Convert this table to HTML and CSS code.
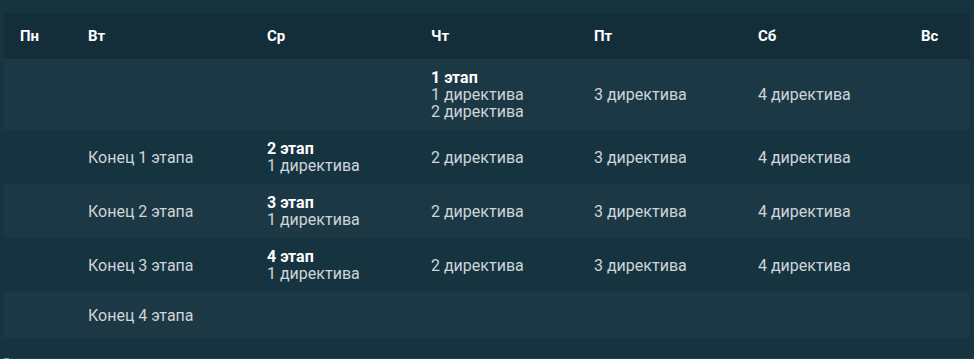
FILE: index.html
```html
<!DOCTYPE html>
<html lang="ru">
<head>
<meta charset="utf-8">
<link rel="stylesheet" href="styles.css">
</head>
<body>
<div class="wrap">
<table class="sched">
  <colgroup>
    <col class="c1"><col class="c2"><col class="c3"><col class="c4"><col class="c5"><col class="c6"><col class="c7">
  </colgroup>
  <thead>
    <tr><th>Пн</th><th>Вт</th><th>Ср</th><th>Чт</th><th>Пт</th><th>Сб</th><th>Вс</th></tr>
  </thead>
  <tbody>
    <tr class="odd">
      <td></td><td></td><td></td>
      <td><b>1 этап</b><br>1 директива<br>2 директива</td>
      <td>3 директива</td><td>4 директива</td><td></td>
    </tr>
    <tr>
      <td></td><td>Конец 1 этапа</td>
      <td><b>2 этап</b><br>1 директива</td>
      <td>2 директива</td><td>3 директива</td><td>4 директива</td><td></td>
    </tr>
    <tr class="odd">
      <td></td><td>Конец 2 этапа</td>
      <td><b>3 этап</b><br>1 директива</td>
      <td>2 директива</td><td>3 директива</td><td>4 директива</td><td></td>
    </tr>
    <tr>
      <td></td><td>Конец 3 этапа</td>
      <td><b>4 этап</b><br>1 директива</td>
      <td>2 директива</td><td>3 директива</td><td>4 директива</td><td></td>
    </tr>
    <tr class="odd">
      <td></td><td>Конец 4 этапа</td>
      <td></td><td></td><td></td><td></td><td></td>
    </tr>
  </tbody>
</table>
</div>
<div class="bar"><span class="thumb"></span></div>
</body>
</html>
```

FILE: styles.css
```css
html, body {
  margin: 0;
  padding: 0;
  background: #163340;
  height: 100%;
  overflow: hidden;
}
body {
  font-family: Roboto, "Liberation Sans", sans-serif;
  color: #cdd5d9;
}
.wrap {
  padding: 13px 4px 0 4px;
  height: 358px;
  box-sizing: border-box;
}
.sched {
  width: 966px;
  border-collapse: collapse;
  table-layout: fixed;
  font-size: 16px;
  line-height: 17px;
}
.c1 { width: 68px; }
.c2 { width: 179px; }
.c3 { width: 164px; }
.c4 { width: 163px; }
.c5 { width: 164px; }
.c6 { width: 163px; }
.c7 { width: 65px; }
.sched th {
  background: #142e39;
  color: #ffffff;
  font-weight: 700;
  font-size: 15px;
  text-align: left;
  height: 46px;
  padding: 0 0 0 16px;
  box-sizing: border-box;
}
.sched td {
  padding: 10px 0 10px 16px;
  height: 46px;
  box-sizing: border-box;
  vertical-align: middle;
  white-space: nowrap;
}
.sched tr.odd td {
  background: #1c3844;
}
.sched b {
  color: #ffffff;
  font-weight: 700;
}
.bar {
  height: 1px;
  background: #1d4452;
}
.thumb {
  display: block;
  width: 5px;
  height: 1px;
  margin-left: 4px;
  background: #2ac7d0;
}
```
